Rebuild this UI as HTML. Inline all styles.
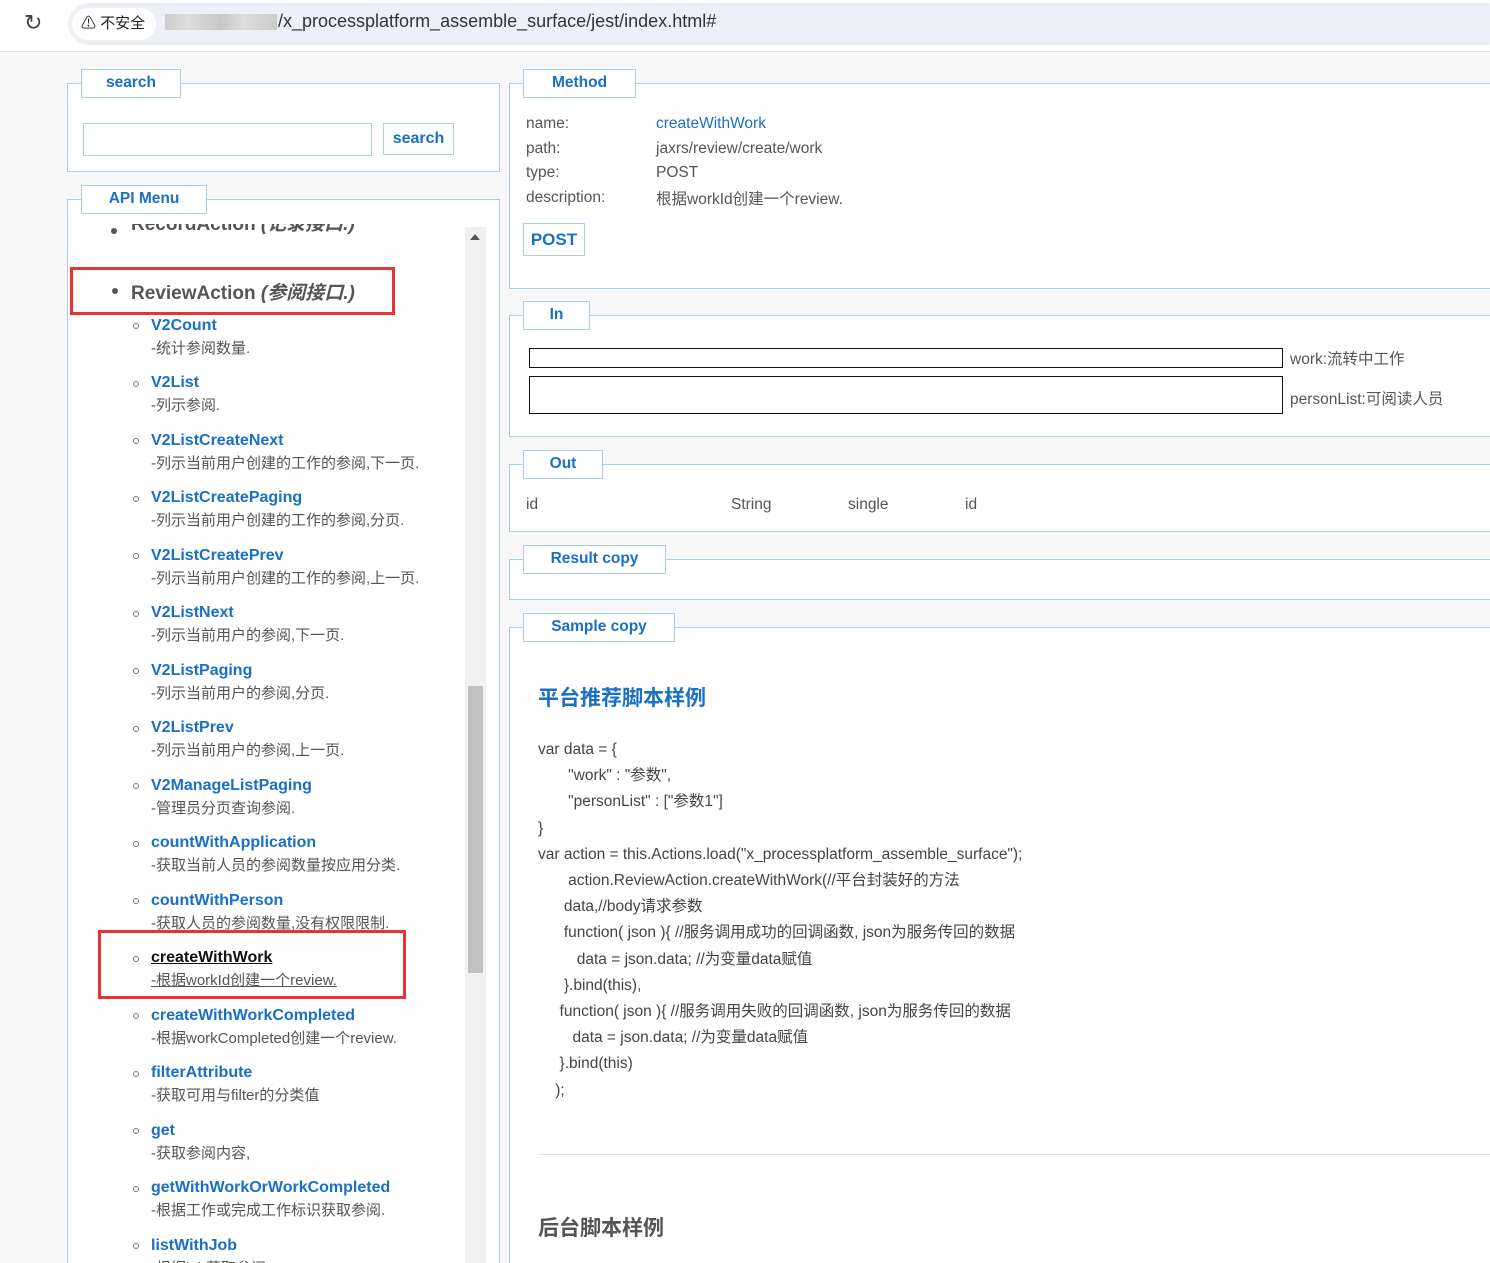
<!DOCTYPE html>
<html><head><meta charset="utf-8"><style>
*{box-sizing:border-box;margin:0;padding:0}
html,body{width:1490px;height:1263px;overflow:hidden}
body{background:#f8f8f8;font-family:"Liberation Sans","Noto Sans CJK SC",sans-serif;color:#444;position:relative}
.a{position:absolute}
.top{left:0;top:0;width:1490px;height:52px;background:#fff;border-bottom:1px solid #e3e3e3}
.url{left:68px;top:3px;width:1440px;height:42px;background:#eef0f8;border-radius:21px}
.ins{left:72px;top:8px;width:84px;height:32px;background:#fff;border-radius:16px;font-size:15px;color:#222;line-height:32px;padding-left:9px}
.box{border:1px solid #a8cdf0;background:#fff}
.leg{border:1px solid #a8cdf0;background:#fff;color:#1a6fc6;font-weight:bold;font-size:15.5px;text-align:center;line-height:26px}
.it{left:151px;font-size:16px}
.it b{color:#1a6fc6;display:block;line-height:22px}
.it span{display:block;line-height:23px;color:#555;font-size:15px}
.dot{left:133px;width:6px;height:6px;border:1px solid #777;border-radius:50%}
.lbl{font-size:15.5px;color:#555}
.code{left:538px;font-size:15.5px;color:#444;line-height:26.2px;white-space:pre}
</style></head><body>
<div class="a top"></div>
<div class="a url"></div>
<div class="a" style="left:24px;top:10px;font-size:22px;color:#444">&#x21bb;</div>
<div class="a ins">⚠ 不安全</div>
<div class="a" style="left:165px;top:14px;width:112px;height:16px;background:linear-gradient(90deg,#ccc,#ddd 20%,#c8c8c8 50%,#ddd 70%,#ccc)"></div>
<div class="a" style="left:278px;top:11px;font-size:18px;color:#333">/x_processplatform_assemble_surface/jest/index.html#</div>

<div class="a box" style="left:67px;top:83px;width:433px;height:89px"></div>
<div class="a leg" style="left:81px;top:69px;width:100px;height:29px">search</div>
<div class="a" style="left:83px;top:123px;width:289px;height:33px;border:1px solid #a8cdf0;background:#fff"></div>
<div class="a leg" style="left:383px;top:123px;width:71px;height:32px;line-height:30px;font-size:16px">search</div>

<div class="a box" style="left:67px;top:199px;width:433px;height:1080px"></div>
<div class="a leg" style="left:81px;top:185px;width:126px;height:29px">API Menu</div>
<div class="a" style="left:68px;top:224px;width:396px;height:30px;overflow:hidden">
 <div class="a" style="left:43px;top:4px;width:6px;height:6px;background:#555;border-radius:50%"></div>
 <div class="a" style="left:63px;top:-11px;font-size:19px;font-weight:bold;color:#555;line-height:24px">RecordAction <i>(记录接口.)</i></div>
</div>
<div class="a" style="left:465px;top:227px;width:21px;height:1036px;background:#f1f1f1"></div>
<div class="a" style="left:468px;top:686px;width:15px;height:287px;background:#c1c1c1"></div>
<div class="a" style="left:470px;top:234px;width:0;height:0;border-left:5px solid transparent;border-right:5px solid transparent;border-bottom:6px solid #555"></div>
<div class="a" style="left:70px;top:267px;width:325px;height:48px;border:3px solid #e83333"></div>
<div class="a" style="left:112px;top:288px;width:6px;height:6px;background:#555;border-radius:50%"></div>
<div class="a" style="left:131px;top:278px;font-size:19px;font-weight:bold;color:#555">ReviewAction <i>(参阅接口.)</i></div>

<div class="a dot" style="top:323px"></div><div class="a it" style="top:315px"><b>V2Count</b><span>-统计参阅数量.</span></div>
<div class="a dot" style="top:381px"></div><div class="a it" style="top:372px"><b>V2List</b><span>-列示参阅.</span></div>
<div class="a dot" style="top:438px"></div><div class="a it" style="top:430px"><b>V2ListCreateNext</b><span>-列示当前用户创建的工作的参阅,下一页.</span></div>
<div class="a dot" style="top:496px"></div><div class="a it" style="top:487px"><b>V2ListCreatePaging</b><span>-列示当前用户创建的工作的参阅,分页.</span></div>
<div class="a dot" style="top:553px"></div><div class="a it" style="top:545px"><b>V2ListCreatePrev</b><span>-列示当前用户创建的工作的参阅,上一页.</span></div>
<div class="a dot" style="top:611px"></div><div class="a it" style="top:602px"><b>V2ListNext</b><span>-列示当前用户的参阅,下一页.</span></div>
<div class="a dot" style="top:668px"></div><div class="a it" style="top:660px"><b>V2ListPaging</b><span>-列示当前用户的参阅,分页.</span></div>
<div class="a dot" style="top:726px"></div><div class="a it" style="top:717px"><b>V2ListPrev</b><span>-列示当前用户的参阅,上一页.</span></div>
<div class="a dot" style="top:783px"></div><div class="a it" style="top:775px"><b>V2ManageListPaging</b><span>-管理员分页查询参阅.</span></div>
<div class="a dot" style="top:841px"></div><div class="a it" style="top:832px"><b>countWithApplication</b><span>-获取当前人员的参阅数量按应用分类.</span></div>
<div class="a dot" style="top:898px"></div><div class="a it" style="top:890px"><b>countWithPerson</b><span>-获取人员的参阅数量,没有权限限制.</span></div>
<div class="a dot" style="top:956px"></div><div class="a it" style="top:947px"><b style="color:#111;text-decoration:underline">createWithWork</b><span style="text-decoration:underline">-根据workId创建一个review.</span></div>
<div class="a" style="left:98px;top:930px;width:308px;height:69px;border:3px solid #e83333"></div>
<div class="a dot" style="top:1013px"></div><div class="a it" style="top:1005px"><b>createWithWorkCompleted</b><span>-根据workCompleted创建一个review.</span></div>
<div class="a dot" style="top:1071px"></div><div class="a it" style="top:1062px"><b>filterAttribute</b><span>-获取可用与filter的分类值</span></div>
<div class="a dot" style="top:1128px"></div><div class="a it" style="top:1120px"><b>get</b><span>-获取参阅内容,</span></div>
<div class="a dot" style="top:1186px"></div><div class="a it" style="top:1177px"><b>getWithWorkOrWorkCompleted</b><span>-根据工作或完成工作标识获取参阅.</span></div>
<div class="a dot" style="top:1243px"></div><div class="a it" style="top:1235px"><b>listWithJob</b><span>-根据job获取参阅.</span></div>

<div class="a box" style="left:509px;top:83px;width:990px;height:206px"></div>
<div class="a leg" style="left:523px;top:69px;width:113px;height:29px">Method</div>
<div class="a lbl" style="left:526px;top:115px">name:</div><div class="a lbl" style="left:656px;top:115px;color:#1a6fc6">createWithWork</div>
<div class="a lbl" style="left:526px;top:140px">path:</div><div class="a lbl" style="left:656px;top:140px">jaxrs/review/create/work</div>
<div class="a lbl" style="left:526px;top:164px">type:</div><div class="a lbl" style="left:656px;top:164px">POST</div>
<div class="a lbl" style="left:526px;top:189px">description:</div><div class="a lbl" style="left:656px;top:187px">根据workId创建一个review.</div>
<div class="a leg" style="left:523px;top:223px;width:62px;height:33px;line-height:31px;font-size:17px">POST</div>

<div class="a box" style="left:509px;top:315px;width:990px;height:122px"></div>
<div class="a leg" style="left:523px;top:301px;width:67px;height:29px">In</div>
<div class="a" style="left:529px;top:348px;width:754px;height:20px;border:1px solid #111;background:#fff"></div>
<div class="a lbl" style="left:1290px;top:347px">work:流转中工作</div>
<div class="a" style="left:529px;top:376px;width:754px;height:38px;border:1px solid #111;background:#fff"></div>
<div class="a lbl" style="left:1290px;top:387px">personList:可阅读人员</div>

<div class="a box" style="left:509px;top:464px;width:990px;height:68px"></div>
<div class="a leg" style="left:523px;top:450px;width:80px;height:29px">Out</div>
<div class="a lbl" style="left:526px;top:496px">id</div><div class="a lbl" style="left:731px;top:496px">String</div><div class="a lbl" style="left:848px;top:496px">single</div><div class="a lbl" style="left:965px;top:496px">id</div>

<div class="a box" style="left:509px;top:559px;width:990px;height:41px"></div>
<div class="a leg" style="left:523px;top:545px;width:143px;height:29px">Result copy</div>

<div class="a box" style="left:509px;top:627px;width:990px;height:660px"></div>
<div class="a leg" style="left:523px;top:613px;width:152px;height:29px">Sample copy</div>
<div class="a" style="left:538px;top:682px;font-size:21px;font-weight:bold;color:#1a6fc6">平台推荐脚本样例</div>
<div class="a code" style="top:737px">var data = {
       "work" : "参数",
       "personList" : ["参数1"]
}
var action = this.Actions.load("x_processplatform_assemble_surface");
       action.ReviewAction.createWithWork(//平台封装好的方法
      data,//body请求参数
      function( json ){ //服务调用成功的回调函数, json为服务传回的数据
         data = json.data; //为变量data赋值
      }.bind(this),
     function( json ){ //服务调用失败的回调函数, json为服务传回的数据
        data = json.data; //为变量data赋值
     }.bind(this)
    );</div>
<div class="a" style="left:538px;top:1154px;width:952px;height:1px;background:#e5e5e5"></div>
<div class="a" style="left:538px;top:1212px;font-size:21px;font-weight:bold;color:#555">后台脚本样例</div>
</body></html>
